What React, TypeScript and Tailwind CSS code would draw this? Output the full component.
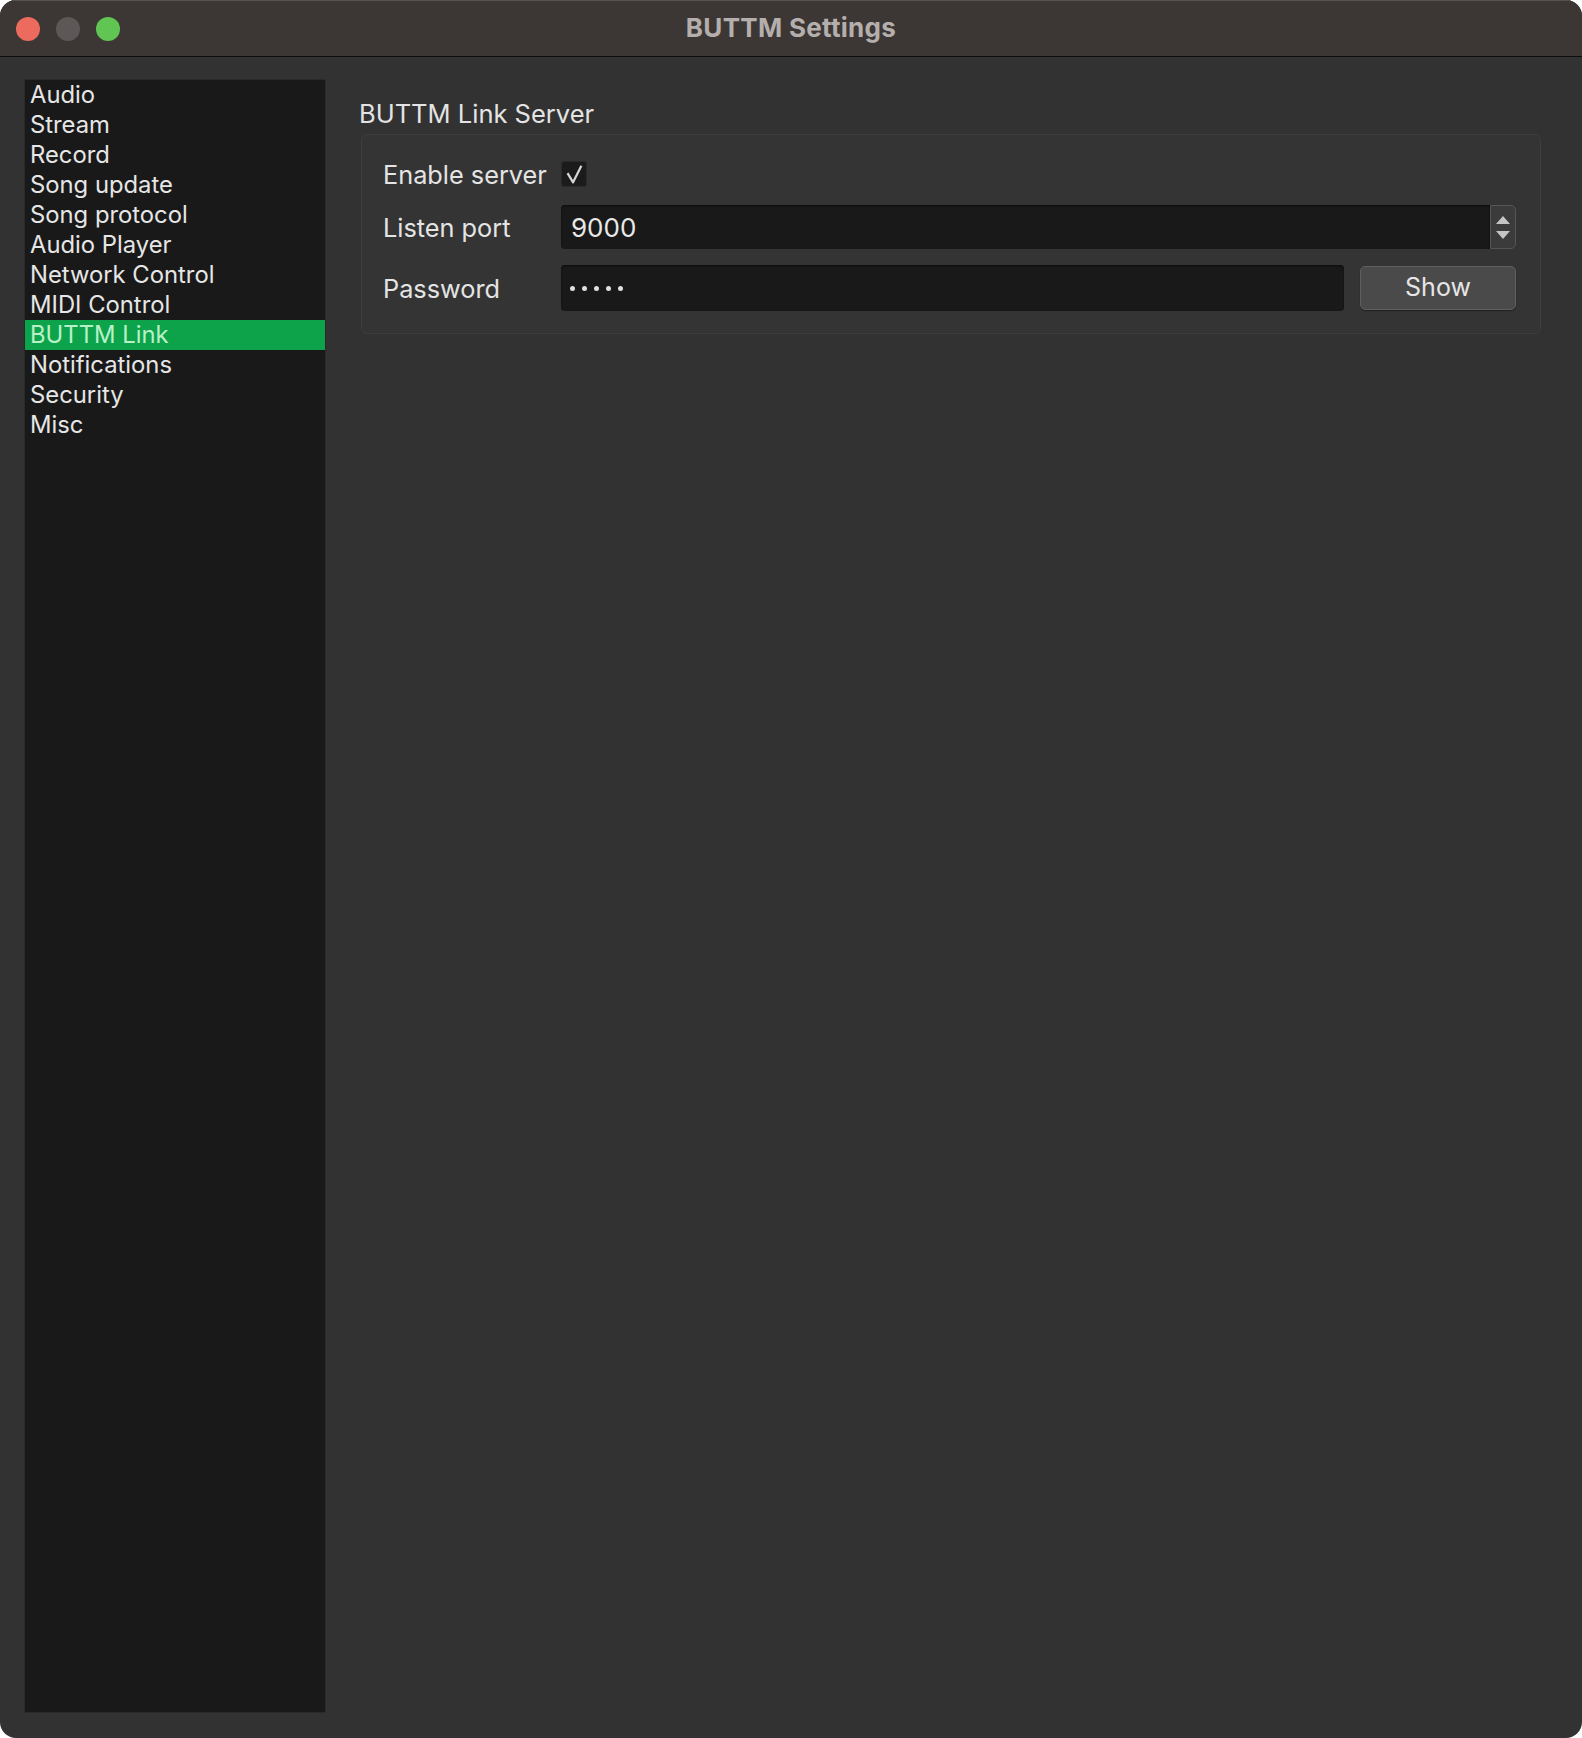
import { useState } from "react"

const sections = [
  "Audio",
  "Stream",
  "Record",
  "Song update",
  "Song protocol",
  "Audio Player",
  "Network Control",
  "MIDI Control",
  "BUTTM Link",
  "Notifications",
  "Security",
  "Misc",
]

const font = { fontFamily: "Inter, 'Noto Sans', sans-serif" }

function TrafficLights() {
  return (
    <div className="flex items-center gap-4 pl-4">
      <span className="w-6 h-6 rounded-full bg-[#ed6a5e]" />
      <span className="w-6 h-6 rounded-full bg-[#5d5857]" />
      <span className="w-6 h-6 rounded-full bg-[#61c554]" />
    </div>
  )
}

function Spinner() {
  return (
    <div className="w-[26px] h-full rounded-r-[5px] border border-[#555] bg-[#3b3b3b] flex flex-col items-center justify-center gap-[7px]">
      <svg width="14" height="8" viewBox="0 0 14 8">
        <path d="M7 0 L14 8 L0 8 Z" fill="#c4c4c4" />
      </svg>
      <svg width="14" height="8" viewBox="0 0 14 8">
        <path d="M0 0 L14 0 L7 8 Z" fill="#c4c4c4" />
      </svg>
    </div>
  )
}

export default function App() {
  const [active, setActive] = useState("BUTTM Link")
  const [enabled, setEnabled] = useState(true)

  return (
    <div className="w-[1582px] h-[1738px] bg-white" style={font}>
      <div className="w-full h-full rounded-[16px] overflow-hidden flex flex-col bg-[#323232]">
        <div className="relative h-[56px] shrink-0 bg-[#3c3734] border-t border-[#57524f] flex items-center">
          <TrafficLights />
          <div className="absolute inset-0 flex items-center justify-center pb-[2px] text-[26px] font-bold text-[#b4afac] tracking-[0.3px]">
            BUTTM Settings
          </div>
        </div>
        <div className="h-px bg-[#0e0e0e] shrink-0" />

        <div className="flex-1 flex pt-[22px] pb-[25px] pl-[24px] pr-[41px]">
          <div className="w-[302px] shrink-0 bg-[#191919] border border-[#2a2a2a] flex flex-col">
            {sections.map((s) => (
              <div
                key={s}
                onClick={() => setActive(s)}
                className={
                  "h-[30px] pl-[5px] text-[23.8px] leading-[30px] whitespace-nowrap " +
                  (s === active ? "bg-[#0ca34b] text-[#b8f1c8]" : "text-[#e6e6e6]")
                }
              >
                {s}
              </div>
            ))}
          </div>

          <div className="flex-1 pl-[33px] pt-[20px]">
            <div className="text-[25.5px] leading-[30px] text-[#e4e4e4]">BUTTM Link Server</div>
            <div className="mt-[5px] ml-[2px] rounded-[6px] border border-[#3d3d3d] bg-[#343434] pt-[26px] pb-[22px] pl-[21px] pr-[24px] flex flex-col">
              <div className="flex items-center h-[26px]">
                <div className="w-[178px] pt-[2px] text-[25.3px] text-[#e4e4e4]">Enable server</div>
                <button
                  onClick={() => setEnabled(!enabled)}
                  className="w-[26px] h-[26px] rounded-[3px] bg-[#1b1b1b] border border-[#2a2a2a] flex items-center justify-center"
                >
                  {enabled && (
                    <svg width="26" height="26" viewBox="0 0 26 26">
                      <path d="M6 12 L12 22 L21 4" stroke="#d4d4d4" strokeWidth="2.4" fill="none" strokeLinejoin="round" />
                    </svg>
                  )}
                </button>
              </div>

              <div className="flex items-center h-[44px] mt-[18px]">
                <div className="w-[178px] pt-[2px] text-[25.3px] text-[#e4e4e4]">Listen port</div>
                <div className="flex-1 h-full flex">
                  <div className="flex-1 h-full rounded-l-[4px] bg-[#191919] shadow-[inset_0_1px_2px_rgba(0,0,0,0.6)] flex items-center pl-[10px] text-[26px] text-[#e8e8e8]">
                    9000
                  </div>
                  <Spinner />
                </div>
              </div>

              <div className="flex items-center h-[46px] mt-[16px]">
                <div className="w-[178px] pt-[2px] text-[25.3px] text-[#e4e4e4]">Password</div>
                <div className="flex-1 h-full flex gap-[16px]">
                  <div className="flex-1 h-full rounded-[4px] bg-[#191919] shadow-[inset_0_1px_2px_rgba(0,0,0,0.6)] flex items-center gap-[7px] pl-[9px]">
                    {[0, 1, 2, 3, 4].map((i) => (
                      <span key={i} className="w-[5px] h-[5px] rounded-full bg-[#e0e0e0]" />
                    ))}
                  </div>
                  <button className="w-[156px] h-[44px] self-center rounded-[5px] border border-[#5e5e5e] bg-[#4a4a4a] text-[25px] text-[#e6e6e6] shadow-[0_1px_1px_rgba(0,0,0,0.4)]">
                    Show
                  </button>
                </div>
              </div>
            </div>
          </div>
        </div>
      </div>
    </div>
  )
}
